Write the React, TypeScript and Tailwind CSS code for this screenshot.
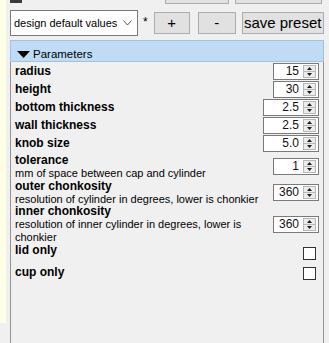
import React from "react";

function Up() {
  return (
    <svg width="5" height="3" viewBox="0 0 5 3">
      <polygon points="2.5,0 5,3 0,3" fill="#1a1a1a" />
    </svg>
  );
}
function Down() {
  return (
    <svg width="5" height="3" viewBox="0 0 5 3">
      <polygon points="0,0 5,0 2.5,3" fill="#1a1a1a" />
    </svg>
  );
}

function NumBox({ value, wide }: { value: string; wide?: boolean }) {
  return (
    <div
      className={
        (wide ? "w-[56px]" : "w-[46px]") +
        " h-[17px] border border-[#7a7a7a] bg-white flex items-stretch shrink-0"
      }
    >
      <div className="flex-1 text-right pr-[4px] text-[12px] leading-[15px] text-[#111]">{value}</div>
      <div className="w-[13px] my-[1px] mr-[2px] flex flex-col border border-[#b8b8b8] bg-[#ececec]">
        <div className="flex-1 flex items-center justify-center border-b border-[#b8b8b8]">
          <Up />
        </div>
        <div className="flex-1 flex items-center justify-center">
          <Down />
        </div>
      </div>
    </div>
  );
}

function SimpleRow({ label, value, wide }: { label: string; value: string; wide?: boolean }) {
  return (
    <div className="h-[18px] flex items-center justify-between">
      <span className="font-bold text-[12px] leading-[13px] text-black">{label}</span>
      <NumBox value={value} wide={wide} />
    </div>
  );
}

function DescRow({ label, desc, value }: { label: string; desc: string; value: string }) {
  return (
    <div className="flex items-center justify-between">
      <div className="flex flex-col w-[250px]">
        <span className="font-bold text-[12px] leading-[13px] text-black">{label}</span>
        <span className="text-[11px] leading-[12.5px] text-black">{desc}</span>
      </div>
      <NumBox value={value} />
    </div>
  );
}

export default function App() {
  return (
    <div className="w-[329px] h-[343px] bg-[#f0f0f0] flex overflow-hidden font-['Liberation_Sans',Arial,sans-serif] text-black">
      <div className="w-[6px] h-[323px] bg-[#ffffe8] shrink-0" />
      <div className="ml-[4px] w-[315px] flex flex-col">
        {/* cut-off top row */}
        <div className="h-[4px] flex items-start">
          <div className="w-[12px] h-[3px] bg-[#3a3a3a]" />
          <div className="ml-[143px] w-[64px] h-[4px] bg-[#e1e1e1] border-x border-b border-[#adadad]" />
          <div className="ml-[6px] w-[87px] h-[4px] bg-[#e1e1e1] border-x border-b border-[#adadad]" />
        </div>
        {/* preset row */}
        <div className="mt-[6px] h-[26px] flex items-center">
          <div className="w-[128px] h-[26px] bg-white border border-[#7a7a7a] flex items-center pl-[3px] pr-[5px]">
            <span className="flex-1 text-[11px] leading-[14px] whitespace-nowrap">design default values</span>
            <svg width="9" height="6" viewBox="0 0 9 6">
              <polyline points="0.5,0.5 4.5,5 8.5,0.5" fill="none" stroke="#555" strokeWidth="1" />
            </svg>
          </div>
          <span className="ml-[5px] text-[12px] leading-[14px] -mt-[3px]">*</span>
          <div className="ml-[6px] w-[36px] h-[22px] bg-[#e1e1e1] border border-[#adadad] flex items-center justify-center text-[15px] leading-[16px]">
            +
          </div>
          <div className="ml-[8px] w-[38px] h-[22px] bg-[#e1e1e1] border border-[#adadad] flex items-center justify-center text-[15px] leading-[16px]">
            -
          </div>
          <div className="ml-[6px] w-[82px] h-[22px] bg-[#e1e1e1] border border-[#adadad] flex items-center justify-center text-[15px] leading-[16px] whitespace-nowrap">
            save preset
          </div>
        </div>
        {/* panel */}
        <div className="mt-[4px] w-[314px] flex-1 border-x border-[#939393] flex flex-col">
          <div className="h-[22px] -mx-[1px] bg-[#bfdcf4] border border-[#9fc3e3] flex items-center pl-[6px] pt-[6px]">
            <svg width="13" height="7" viewBox="0 0 13 7">
              <polygon points="0,0 13,0 6.5,7" fill="#000" />
            </svg>
            <span className="ml-[3px] text-[11.5px] leading-[13px]">Parameters</span>
          </div>
          <div className="pl-[4px] pr-[4px] flex flex-col">
            <SimpleRow label="radius" value="15" />
            <SimpleRow label="height" value="30" />
            <SimpleRow label="bottom thickness" value="2.5" wide />
            <SimpleRow label="wall thickness" value="2.5" wide />
            <SimpleRow label="knob size" value="5.0" wide />
            <div className="mt-[2px]">
              <DescRow label="tolerance" desc="mm of space between cap and cylinder" value="1" />
            </div>
            <DescRow
              label="outer chonkosity"
              desc="resolution of cylinder in degrees, lower is chonkier"
              value="360"
            />
            <DescRow
              label="inner chonkosity"
              desc="resolution of inner cylinder in degrees, lower is chonkier"
              value="360"
            />
            <div className="mt-[1px] h-[22px] flex items-start justify-between">
              <span className="font-bold text-[12px] leading-[13px]">lid only</span>
              <div className="mt-[3px] mr-[3px] w-[13px] h-[13px] bg-white border border-[#333]" />
            </div>
            <div className="h-[21px] flex items-start justify-between">
              <span className="font-bold text-[12px] leading-[13px]">cup only</span>
              <div className="mt-[1px] mr-[3px] w-[13px] h-[13px] bg-white border border-[#333]" />
            </div>
          </div>
        </div>
      </div>
    </div>
  );
}
